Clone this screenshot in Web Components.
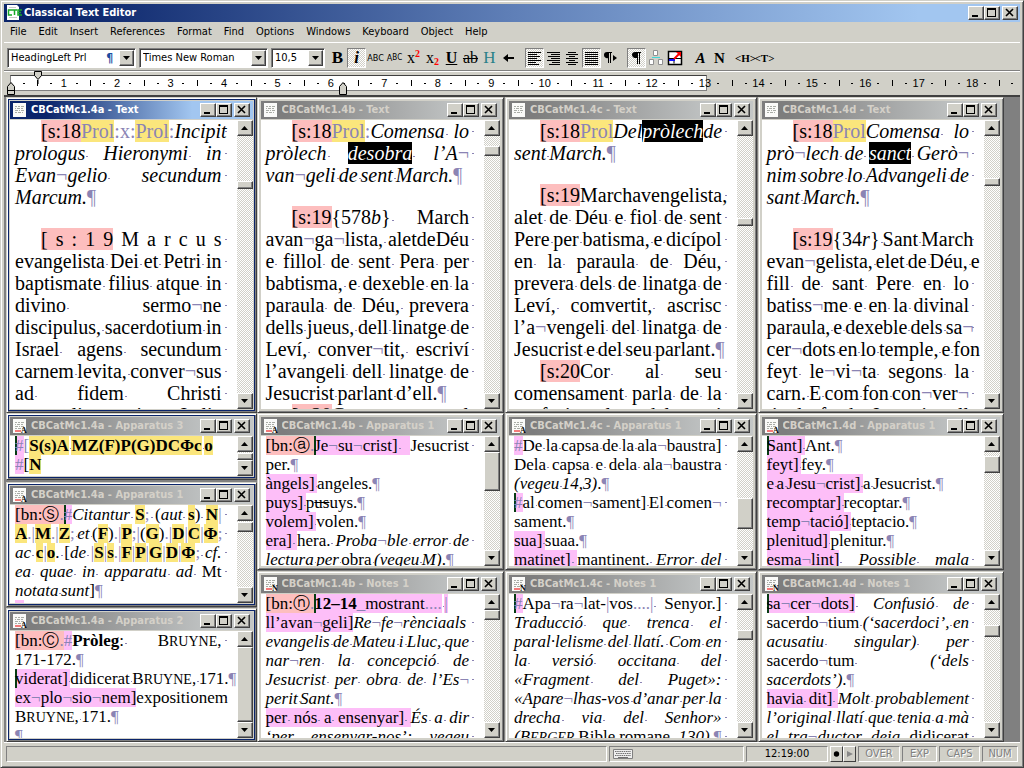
<!DOCTYPE html>
<html lang="ca">
<head>
<meta charset="utf-8">
<title>Classical Text Editor</title>
<style>
  html, body { margin: 0; height: 100%; }
  body {
    --face: #d1d0c8; --shadow: #808080; --dark: #404040; --mark: #8b84b4;
    --ui: "DejaVu Sans Condensed", "Noto Sans", sans-serif;
    --dither: repeating-conic-gradient(#fff 0 25%, #d1d0c8 0 50%) 0 0 / 2px 2px;
    background: var(--face); color: #000; overflow: hidden;
    font: 11px var(--ui);
  }
  /* inline marks used in the documents */
  text-line .sp { font-size: var(--gap); background: linear-gradient(var(--mark), var(--mark)) 1px 55% / 2px 1px no-repeat; }
  text-line .f { color: var(--mark); font-style: normal; font-weight: 400; }
  text-line .o { display: inline-block; text-align-last: left; }
  mark { color: inherit; background: #fdbebe; }
  mark.y { background: #fbe67c; }
  mark.y.p { color: var(--mark); font-style: normal; }
  mark.n { background: #fdbef8; }
  mark.k { box-shadow: inset 2px 0 #063c12; }
  mark.x { background: #000; color: #fff; }
  mark.g { font-weight: 700; font-style: normal; }
  small { font-size: 14px; }
</style>
</head>
<body>
<cte-app>
  <doc-column style="flex-grow:251">
    <doc-window caption="CBCatMc1.4a - Text" active framed style="--h:316" before="45" size="8" after="204">
      <text-line in><mark>[s:18</mark><mark class="y p">Prol</mark><span class="f">:x:</span><mark class="y p">Prol</mark><span class="f">:</span><i>Incipit</i></text-line>
      <text-line><i>prologus Hieronymi in</i></text-line>
      <text-line><i>Evan¬gelio secundum</i></text-line>
      <text-line last><i>Marcum.</i>¶</text-line>
      <text-line gap></text-line>
      <text-line in plain><mark>[ s : 1 9</mark> M a r c u s</text-line>
      <text-line>evangelista Dei et Petri in</text-line>
      <text-line>baptismate filius atque in</text-line>
      <text-line>divino sermo¬ne</text-line>
      <text-line>discipulus, sacerdotium in</text-line>
      <text-line>Israel agens secundum</text-line>
      <text-line>carnem levita, conver¬sus</text-line>
      <text-line>ad fidem Christi</text-line>
      <text-line>evangelium in Italia</text-line>
    </doc-window>
    <doc-window caption="CBCatMc1.4a - Apparatus 3" letter="A" framed small style="--h:67" before="1" size="7" after="0">
      <text-line last><mark class="n k">#</mark><span class="f">[</span><mark class="y g">S</mark><mark class="y g">(s)</mark><mark class="y g">A</mark> <mark class="y g">M</mark><mark class="y g">Z</mark><mark class="y g">(F)</mark><mark class="y g">P</mark><mark class="y g">(G)</mark><mark class="y g">D</mark><mark class="y g">C</mark><mark class="y g">Φ</mark><mark class="y g">c</mark> <mark class="y g">o</mark></text-line>
      <text-line last><mark class="n">#</mark>[<mark class="y g">N</mark></text-line>
    </doc-window>
    <doc-window caption="CBCatMc1.4a - Apparatus 1" letter="A" framed small style="--h:125;margin-top:2px" before="1" size="10" after="55">
      <text-line><mark>[bn:Ⓢ<span class="f">.</span></mark><mark class="n k">#</mark><i>Citantur </i><mark class="y g">S</mark><span class="f">;</span> (<i>aut </i><mark class="y g">s</mark>) <mark class="y g">N</mark><span class="f">|</span></text-line>
      <text-line><mark class="y g">A</mark><span class="f">.|</span><mark class="y g">M</mark><span class="f">.|</span><mark class="y g">Z</mark><span class="f">;</span> <i>et</i> (<mark class="y g">F</mark>)<span class="f">.|</span><mark class="y g">P</mark><span class="f">;|</span>(<mark class="y g">G</mark>)<span class="f">.|</span><mark class="y g">D</mark><span class="f">|</span><mark class="y g">C</mark><span class="f">|</span><mark class="y g">Φ</mark><span class="f">;</span></text-line>
      <text-line><i>ac </i><mark class="y g">c</mark><span class="f">|</span><mark class="y g">o</mark>. [<i>de </i><span class="f">|</span><mark class="y g">S</mark><span class="f">|</span><mark class="y g">s</mark><span class="f">.|</span><mark class="y g">F</mark><span class="f">|</span><mark class="y g">P</mark><span class="f">|</span><mark class="y g">G</mark><span class="f">|</span><mark class="y g">D</mark><span class="f">|</span><mark class="y g">Φ</mark><span class="f">;</span> <i>cf.</i></text-line>
      <text-line><i>ea quae in apparatu ad</i> Mt</text-line>
      <text-line last><i>notata sunt</i>]¶</text-line>
      <text-line><mark class="n">#</mark>Ihi hili [ et bo hild</text-line>
    </doc-window>
    <doc-window caption="CBCatMc1.4a - Apparatus 2" letter="A" framed small style="--h:134;margin-top:1px" before="0" size="75" after="0">
      <text-line><mark>[bn:Ⓒ<span class="f">.</span></mark><mark class="n">#</mark><b>Pròleg</b>: B<small>RUYNE</small>,</text-line>
      <text-line last>171-172.¶</text-line>
      <text-line last><mark class="n k">viderat] </mark>didicerat B<small>RUYNE</small>, 171.¶</text-line>
      <text-line><mark class="n">ex¬plo¬sio¬nem]</mark>expositionem</text-line>
      <text-line last>B<small>RUYNE</small>, 171.¶</text-line>
      <text-line last>¶</text-line>
    </doc-window>
  </doc-column>

  <doc-column style="flex-grow:248">
    <doc-window caption="CBCatMc1.4b - Text" style="--h:316" before="10" size="10" after="237">
      <text-line in><mark>[s:18</mark><mark class="y p">Prol</mark><span class="f">:</span><i>Comensa lo</i></text-line>
      <text-line><i>pròlech <mark class="x">desobra</mark> l’A¬</i></text-line>
      <text-line last><i>van¬geli de sent March.</i>¶</text-line>
      <text-line gap></text-line>
      <text-line in><mark>[s:19</mark>{578<i>b</i>} March</text-line>
      <text-line>avan¬ga¬lista, aletdeDéu</text-line>
      <text-line>e fillol de sent Pera per</text-line>
      <text-line>babtisma, e dexeble en la</text-line>
      <text-line>paraula de Déu, prevera</text-line>
      <text-line>dells jueus, dell linatge de</text-line>
      <text-line>Leví, conver¬tit, escriví</text-line>
      <text-line>l’avangeli dell linatge de</text-line>
      <text-line last>Jesucrist parlant d’ell.¶</text-line>
      <text-line in><mark>[s:20</mark>Con al</text-line>
    </doc-window>
    <doc-window caption="CBCatMc1.4b - Apparatus 1" letter="A" small style="--h:157" before="0" size="39" after="59">
      <text-line><mark>[bn:ⓐ<span class="f">.</span></mark><mark class="n k">Je¬su¬crist] </mark> Jesucrist</text-line>
      <text-line last>per.¶</text-line>
      <text-line last><mark class="n">àngels] </mark>angeles.¶</text-line>
      <text-line last><mark class="n">puys] </mark>p<s>us</s>uys.¶</text-line>
      <text-line last><mark class="n">volem] </mark>volen.¶</text-line>
      <text-line><mark class="n">era] </mark>hera. <i>Proba¬ble error de</i></text-line>
      <text-line last><i>lectura per</i> obra <i>(vegeu M)</i>.¶</text-line>
    </doc-window>
    <doc-window caption="CBCatMc1.4b - Notes 1" letter="N" small style="--h:171;margin-top:1px" before="0" size="10" after="101">
      <text-line last><mark>[bn:ⓝ<span class="f">.</span></mark><mark class="n k"><b>12–14</b><span class="f">_</span>mostrant<span class="f">....</span></mark> <mark class="n"><span class="f">|</span></mark></text-line>
      <text-line><mark class="n">ll’avan¬geli]</mark><i>Re¬fe¬rènciaals</i></text-line>
      <text-line><i>evangelis de Mateu i Lluc, que</i></text-line>
      <text-line><i>nar¬ren la concepció de</i></text-line>
      <text-line><i>Jesucrist per obra de l’Es¬</i></text-line>
      <text-line last><i>perit Sant.</i>¶</text-line>
      <text-line><mark class="n">per nós a ensenyar] </mark><i>És a dir</i></text-line>
      <text-line><i>‘per ensenyar-nos’: vegeu</i></text-line>
    </doc-window>
  </doc-column>

  <doc-column style="flex-grow:252">
    <doc-window caption="CBCatMc1.4c - Text" style="--h:316" before="82" size="8" after="167">
      <text-line in><mark>[s:18</mark><mark class="y p">Prol</mark><i>Del<mark class="x">pròlech</mark>de</i></text-line>
      <text-line last><i>sent March.</i>¶</text-line>
      <text-line gap></text-line>
      <text-line in><mark>[s:19</mark>Marchavengelista,</text-line>
      <text-line>alet de Déu e fiol de sent</text-line>
      <text-line>Pere per batisma, e dicípol</text-line>
      <text-line>en la paraula de Déu,</text-line>
      <text-line>prevera dels de linatga de</text-line>
      <text-line>Leví, comvertit, ascrisc</text-line>
      <text-line>l’a¬vengeli del linatga de</text-line>
      <text-line last>Jesucrist e del seu parlant.¶</text-line>
      <text-line in><mark>[s:20</mark>Cor al seu</text-line>
      <text-line>comensament parla de la</text-line>
      <text-line>profecia la del qui</text-line>
    </doc-window>
    <doc-window caption="CBCatMc1.4c - Apparatus 1" letter="A" small style="--h:157" before="46" size="31" after="21">
      <text-line><mark class="n">#</mark>De la capsa de la ala¬baustra]</text-line>
      <text-line>Dela capsa e dela ala¬baustra</text-line>
      <text-line last><i>(vegeu 14,3)</i>.¶</text-line>
      <text-line><mark class="n k">#</mark>al comen¬sament] El comen¬</text-line>
      <text-line last>sament.¶</text-line>
      <text-line last><mark class="n">sua] </mark>suaa.¶</text-line>
      <text-line><mark class="n">matinet] </mark>mantinent. <i>Error del</i></text-line>
    </doc-window>
    <doc-window caption="CBCatMc1.4c - Notes 1" letter="N" small style="--h:171;margin-top:1px" before="20" size="10" after="82">
      <text-line><mark class="n k">#</mark>Apa¬ra¬lat-<span class="f">|</span>vos<span class="f">....|</span> Senyor.]</text-line>
      <text-line><i>Traducció que trenca el</i></text-line>
      <text-line><i>paral·lelisme del llatí. Com en</i></text-line>
      <text-line><i>la versió occitana del</i></text-line>
      <text-line><i>«Fragment del Puget»:</i></text-line>
      <text-line><i>«Apare¬lhas-vos d’anar per la</i></text-line>
      <text-line><i>drecha via del Senhor»</i></text-line>
      <text-line><i>(B<small>ERGER</small></i> Bible romane, <i>130)</i>.¶</text-line>
    </doc-window>
  </doc-column>

  <doc-column style="flex-grow:247">
    <doc-window caption="CBCatMc1.4d - Text" style="--h:316" before="42" size="8" after="207">
      <text-line in><mark>[s:18</mark><mark class="y p">Prol</mark><i>Comensa lo</i></text-line>
      <text-line><i>prò¬lech de <mark class="x">sanct</mark> Gerò¬</i></text-line>
      <text-line><i>nim sobre lo Advangeli de</i></text-line>
      <text-line last><i>sant March.</i>¶</text-line>
      <text-line gap></text-line>
      <text-line in><mark>[s:19</mark>{34<i>r</i>} Sant March</text-line>
      <text-line>evan¬gelista, elet de Déu, e</text-line>
      <text-line>fill de sant Pere en lo</text-line>
      <text-line>batiss¬me e en la divinal</text-line>
      <text-line>paraula, e dexeble dels sa¬</text-line>
      <text-line>cer¬dots en lo temple, e fon</text-line>
      <text-line>feyt le¬vi¬ta segons la</text-line>
      <text-line>carn. E com fon con¬ver¬</text-line>
      <text-line>tit de fe de Jesucrist ell</text-line>
    </doc-window>
    <doc-window caption="CBCatMc1.4d - Apparatus 1" letter="A" small style="--h:157" before="4" size="17" after="77">
      <text-line last><mark class="n k">Sant] </mark>Ant.¶</text-line>
      <text-line last><mark class="n">feyt] </mark>fey.¶</text-line>
      <text-line last><mark class="n">e a Jesu¬crist] </mark>a Jesucrist.¶</text-line>
      <text-line last><mark class="n">recomptar] </mark>recoptar.¶</text-line>
      <text-line last><mark class="n">temp¬tació] </mark>teptacio.¶</text-line>
      <text-line last><mark class="n">plenitud] </mark>plenitur.¶</text-line>
      <text-line><mark class="n">esma¬lint]</mark> <i>Possible mala</i></text-line>
    </doc-window>
    <doc-window caption="CBCatMc1.4d - Notes 1" letter="N" small style="--h:171;margin-top:1px" before="15" size="12" after="85">
      <text-line><mark class="n k">sa¬cer¬dots]</mark> <i>Confusió de</i></text-line>
      <text-line>sacerdo¬tium <i>(‘sacerdoci’, en</i></text-line>
      <text-line><i>acusatiu singular) per</i></text-line>
      <text-line>sacerdo¬tum <i>(‘dels</i></text-line>
      <text-line last><i>sacerdots’)</i>.¶</text-line>
      <text-line><mark class="n">havia dit] </mark><i>Molt probablement</i></text-line>
      <text-line><i>l’original llatí que tenia a mà</i></text-line>
      <text-line><i>el tra¬ductor deia</i> didicerat</text-line>
    </doc-window>
  </doc-column>
</cte-app>

<script>
const define = (name, html, setup) => customElements.define(name, class extends HTMLElement {
  connectedCallback() {
    if (this.shadowRoot) return;
    const root = this.attachShadow({ mode: 'open' });
    root.innerHTML = typeof html === 'function' ? html(this) : html;
    if (setup) setup(this, root);
  }
});

/* a line of a document: spaces, hyphenation points and paragraph ends get visible marks */
define('text-line', `<style>
  :host { display: block; height: var(--lh); line-height: var(--lh); white-space: nowrap; text-align-last: justify;
    margin-right: -6px; padding-right: 6px;
    background: linear-gradient(var(--mark), var(--mark)) right 1px top 50% / 2px 1px no-repeat; }
  :host([last]) { text-align-last: left; background: none; }
  :host([in]) { padding-left: 26px; }
  :host([gap]) { height: 20px; background: none; }
</style><slot></slot>`, el => {
  const plain = el.hasAttribute('plain');
  const wrap = c => c === ' ' ? (plain ? ' ' : '<span class="sp"> </span>')
    : /[¬¶#]/.test(c) ? `<span class="f">${c}</span>` : `<span class="o">${c}</span>`;
  el.innerHTML = el.innerHTML.split(/(<[^>]+>)/).map(part => part[0] === '<' ? part : part.replace(/[ ¬¶#ⓐⓝⓈⒸ]/g, wrap)).join('');
});

define('window-buttons', `<style>
  :host { display: flex; }
  button { width: 16px; height: 14px; padding: 0; background: var(--face); border: 1px solid; border-color: #fff var(--dark) var(--dark) #fff;
    box-shadow: inset -1px -1px var(--shadow); display: flex; }
  button:last-child { margin-left: 2px; }
  svg { width: 14px; height: 12px; fill: none; stroke: #000; stroke-width: 2; }
</style>
<button aria-label="Minimize"><svg viewBox="0 0 14 12"><path d="M3 9h6"/></svg></button>
<button aria-label="Maximize"><svg viewBox="0 0 14 12" shape-rendering="crispEdges"><path d="M2 2h9"/><path d="M2.5 2v7.500h8V2" stroke-width="1"/></svg></button>
<button aria-label="Close"><svg viewBox="0 0 14 12"><path d="M3 2l7 7M10 2l-7 7" stroke-width="1.600"/></svg></button>`);

define('scroll-bar', el => `<style>
  :host { display: flex; flex-direction: column; width: 16px; flex: none; background: var(--dither); }
  button { flex: none; height: 16px; width: 16px; }
  button, i { padding: 0; display: block; box-sizing: border-box; background: var(--face); border: 1px solid; border-color: #fff var(--dark) var(--dark) #fff;
    box-shadow: inset -1px -1px var(--shadow); }
  i, span { flex: var(--n) var(--n) calc(var(--n) * 1px); min-height: 0; }
  svg { display: block; width: 14px; height: 14px; }
</style>
<button aria-label="Scroll up"><svg viewBox="0 0 14 14"><path d="M3 9l3.500-4L10 9z"/></svg></button>
<span style="--n:${el.getAttribute('before')}"></span><i style="--n:${el.getAttribute('size')}"></i><span style="--n:${el.getAttribute('after')}"></span>
<button aria-label="Scroll down"><svg viewBox="0 0 14 14"><path d="M3 5l3.500 4L10 5z"/></svg></button>`);

define('doc-icon', el => `<style>
  :host { display: block; width: 15px; height: 16px; flex: none; }
  svg { display: block; width: 15px; height: 16px; }
  text { font: 700 8px "Liberation Serif", serif; fill: #000; }
</style><svg viewBox="0 0 15 16"><path d="M1 1h13v14H1z" fill="#fafaf8"/>
<path d="M3 4.500h2M6 4.500h2M9 4.500h3M3 6.500h1M5 6.500h3M9 6.500h2M3 8.500h3M7 8.500h1M9 8.500h3M3 10.500h2M6 10.500h3M10 10.500h1" stroke="#a9aca6" stroke-width="1"/>
${el.getAttribute('letter') ? `<path d="M3 13h6" stroke="#f05050" stroke-width="1.500"/><text x="9" y="15">${el.getAttribute('letter')}</text>` : ''}</svg>`);

define('doc-window', el => {
  const a = n => el.getAttribute(n) || '';
  return `<style>
  :host { flex: var(--h) var(--h) calc(var(--h) * 1px); min-height: 0; box-sizing: border-box; display: flex; flex-direction: column; padding: 3px; background: var(--face);
    border: 1px solid; border-color: var(--face) var(--dark) var(--dark) var(--face);
    box-shadow: inset 1px 1px #fff, inset -1px -1px var(--shadow); --lh: 22px; --fs: 20px; --gap: 12px; }
  :host([framed]) { box-shadow: inset 1px 1px #fff, inset -1px -1px var(--shadow), inset 0 0 0 2px #0a246a; }
  :host([small]) { --lh: 19px; --fs: 17px; --gap: 10px; }
  header { flex: none; height: 18px; margin-bottom: 1px; padding: 0 3px 0 2px; display: flex; align-items: center; gap: 4px;
    background: linear-gradient(90deg, #7d7d7d 10%, #c3c6c6 85%); color: #d4d0c8; font-weight: 700; }
  :host([active]) header { background: linear-gradient(90deg, #0a246a 15%, #a2c6f0 75%); color: #fff; }
  h2 { flex: 1; min-width: 0; margin: 0; font: 700 11px/18px var(--ui); white-space: nowrap; overflow: hidden; }
  main { flex: 1; min-height: 0; display: flex; background: #fff; }
  article { flex: 1; min-width: 0; overflow: hidden; padding: 0 15px 0 5px; font: var(--fs)/var(--lh) "Liberation Serif", serif; }
</style>
<header><doc-icon letter="${a('letter')}"></doc-icon><h2>${a('caption')}</h2><window-buttons></window-buttons></header>
<main><article><slot></slot></article><scroll-bar before="${a('before')}" size="${a('size')}" after="${a('after')}"></scroll-bar></main>`;
});

define('doc-column', `<style>:host { flex-basis: 0; min-width: 0; display: flex; flex-direction: column; box-sizing: border-box; }
  :host(:nth-child(2)), :host(:nth-child(3)) { padding-right: 1px; }</style><slot></slot>`);

define('menu-bar', `<style>
  :host { display: block; height: 20px; }
  nav { display: flex; }
  button { border: 0; background: none; padding: 0 6px; color: inherit; font: 11px/20px var(--ui); }
</style><nav>${['File','Edit','Insert','References','Format','Find','Options','Windows','Keyboard','Object','Help'].map(m => `<button>${m}</button>`).join('')}</nav>`);

define('combo-box', el => `<style>
  :host { display: grid; height: 20px; box-sizing: border-box; border: 1px solid; border-color: var(--shadow) #fff #fff var(--shadow); box-shadow: inset 1px 1px var(--dark); background: #fff; padding: 1px; }
  select, div { grid-area: 1 / 1; min-width: 0; }
  select { appearance: none; border: 0; margin: 0; padding: 0 16px 0 2px; background: none; color: #000; font: 11px/16px var(--ui); }
  div { display: flex; justify-content: flex-end; pointer-events: none; }
  b { color: #1a4ca0; font-size: 12px; line-height: 16px; margin-right: 6px; }
  i { width: 15px; background: var(--face); border: 1px solid; border-color: #fff var(--dark) var(--dark) #fff; box-sizing: border-box; box-shadow: inset -1px -1px var(--shadow); }
  svg { display: block; width: 13px; height: 14px; }
</style><select aria-label="${el.getAttribute('label')}"><option>${el.getAttribute('value')}</option></select>
<div>${el.hasAttribute('para') ? '<b>¶</b>' : ''}<i><svg viewBox="0 0 13 14"><path d="M3 5h7L6.500 9z"/></svg></i></div>`);

const bars = w => `<svg viewBox="0 0 19 20" shape-rendering="crispEdges" stroke="#000">${w.map(([x, l], i) => `<path d="M${x} ${4.5 + i * 2}h${l}"/>`).join('')}</svg>`;
define('tool-bar', `<style>
  :host { display: flex; height: 29px; box-sizing: border-box; align-items: center; padding: 2px 2px 0 3px; border-top: 1px solid #fff; border-bottom: 1px solid var(--shadow); }
  button { width: 19px; height: 20px; padding: 0; border: 1px solid transparent; background: none; color: #000; font: 700 17px/18px "Liberation Serif", serif; display: flex; justify-content: center; align-items: center; flex: none; white-space: nowrap; }
  button[aria-pressed] { background: var(--dither); border-color: var(--shadow) #fff #fff var(--shadow); }
  svg { width: 19px; height: 20px; flex: none; }
  .abc { font: 9px/18px var(--ui); }
  .abc small { font-size: 8px; }
  .x { font-weight: 400; font-size: 16px; }
  .x b { color: #f00; font-size: 10px; }
  .x .up { align-self: flex-start; line-height: 10px; } .x .dn { align-self: flex-end; line-height: 10px; }
  .pl { font-weight: 400; font-size: 16px; }
  .h { color: #2a8088; font-weight: 400; }
  .t { font: 700 15px/18px "Liberation Serif", serif; }
  .tag { font: 700 11px/18px "Liberation Serif", serif; }
  combo-box { flex: none; }
  .g1 { margin-left: 3px; } .g2 { margin-left: 3px; } .g3 { margin-left: 7px; }
</style>
<combo-box label="Style" value="HeadingLeft Prl" para style="width:129px"></combo-box>
<combo-box class="g2" label="Font" value="Times New Roman" style="width:129px"></combo-box>
<combo-box class="g2" label="Size" value="10,5" style="width:54px"></combo-box>
<button class="g1">B</button><button aria-pressed="true"><i>i</i></button>
<button class="abc">ABC</button><button class="abc">A<small>BC</small></button>
<button class="x">x<b class="up">2</b></button><button class="x">x<b class="dn">2</b></button>
<button class="pl"><b><u>U</u></b></button><button class="pl"><s>ab</s></button><button class="h">H</button>
<button aria-label="Back"><svg viewBox="0 0 19 20"><path d="M4 10l5-4v3h6v2H9v3z"/></svg></button>
<button class="g3" aria-label="Align left" aria-pressed="true">${bars([[3,13],[3,9],[3,12],[3,9],[3,13],[3,8],[3,11]])}</button>
<button aria-label="Align right">${bars([[3,13],[7,9],[4,12],[7,9],[3,13],[8,8],[5,11]])}</button>
<button aria-label="Center">${bars([[5,8],[3,12],[6,6],[3,12],[6,6],[3,12],[5,8]])}</button>
<button aria-label="Justify" aria-pressed="true">${bars([[3,13],[3,13],[3,13],[3,13],[3,13],[3,13],[3,13]])}</button>
<button aria-label="Text direction"><svg viewBox="0 0 19 20"><path d="M3 7a3 3 0 0 1 3-3h5v1h-1v10H9V5H8v10H7v-5a3 3 0 0 1-4-3zM12 7l4 3-4 3z"/></svg></button>
<button class="g3" aria-label="Show marks" aria-pressed="true"><svg viewBox="0 0 19 20"><path d="M5 7a3 3 0 0 1 3-3h6v1h-1v11h-1V5h-1v11h-1v-6a4 3 0 0 1-5-3z"/></svg></button>
<button aria-label="Tree"><svg viewBox="0 0 19 20" fill="#fff" stroke="#909090"><path d="M7.500 2.500h4v5h-4zM3.500 11.500h4v5h-4zM12.500 11.500h4v5h-4z"/><path d="M6 9.500h8" stroke="#40d8d8"/></svg></button>
<button aria-label="Picture"><svg viewBox="0 0 19 20"><path d="M3.500 3.500h13v13h-13z" fill="#fff" stroke="#000" stroke-width="1.500"/><path d="M4 10.500h5v5M9 10.500h7" stroke="#000" fill="none"/><path d="M4 12h6" stroke="#11f" stroke-width="2"/><path d="M9 11l5-5" stroke="#f00" stroke-width="2"/><path d="M11 4h5v5z" fill="#f00"/></svg></button>
<button class="g3 t"><i>A</i></button><button class="t">N</button>
<button class="g3 tag">&lt;H&gt;</button><button class="tag">&lt;T&gt;</button>`);

define('ruler-bar', `<style>
  :host { display: grid; height: 24px; box-sizing: border-box; border-top: 1px solid #fff; padding: 3px 0 0 6px; }
  .band, ol { grid-area: 1 / 1; }
  .band { width: 69%; height: 16px; box-sizing: border-box; background: #fff; border: 1px solid var(--shadow); border-top-color: var(--dark); }
  ol { list-style: none; margin: 0; padding: 0 21px 0 27px; display: flex; height: 16px; align-items: center;
    background: linear-gradient(#000,#000) 13px 50%/2px 1px no-repeat, linear-gradient(#000,#000) right 7px top 50%/2px 1px no-repeat, linear-gradient(#000,#000) right 20px top 50%/1px 6px no-repeat; }
  li { flex: 1; text-align: center; font: 11px/16px "Liberation Sans", sans-serif;
    background: linear-gradient(#000,#000) 0 50%/1px 6px no-repeat, linear-gradient(#000,#000) 25% 50%/2px 1px no-repeat, linear-gradient(#000,#000) 75% 50%/2px 1px no-repeat; }
  svg { position: absolute; width: 10px; height: 13px; fill: var(--face); stroke: #000; }
</style>
<div class="band"></div>
<ol>${Array.from({ length: 18 }, (_, i) => `<li>${i + 1}</li>`).join('')}</ol>
<svg style="left:6px;top:82px" viewBox="0 0 10 13"><path d="M1.500 12.500v-8l3.500-4 3.500 4v8zM1.500 8.500h7" /></svg>
<svg style="left:33px;top:71px" viewBox="0 0 10 13"><path d="M1.500.500h7v4l-3.500 4-3.500-4zM5 9v4"/></svg>
<svg style="left:338px;top:82px" viewBox="0 0 10 13"><path d="M1.500 12.500v-8l3.500-4 3.500 4v8z"/></svg>`);

define('status-bar', `<style>
  :host { display: flex; height: 16px; padding: 3px 2px 2px; gap: 2px; border-top: 1px solid #fff; }
  div { box-sizing: border-box; height: 16px; border: 1px solid; border-color: var(--shadow) #fff #fff var(--shadow); text-align: center; font: 11px/14px var(--ui); flex: none; }
  .off { color: var(--shadow); text-shadow: 1px 1px #fff; }
  .rec { display: flex; border: 0; }
  .rec button { width: 13px; height: 16px; padding: 0; border: 1px solid; border-color: #fff var(--dark) var(--dark) #fff; background: var(--face); }
  svg { display: block; }
</style>
<div style="flex:1"></div>
<div style="width:135px"><svg width="22" height="12" viewBox="0 0 22 12" style="margin:1px 2px"><path d="M1.500 1.500h19v9h-19z" fill="#eee" stroke="#808080"/><path d="M3 3.500h16M4 5.500h15M3 7.500h16" stroke="#707070" stroke-dasharray="1.500 .700"/><path d="M6 9.500h10" stroke="#707070"/></svg></div>
<div style="width:82px">12:19:00</div>
<div class="rec"><button aria-label="Record"><svg width="11" height="14"><circle cx="5.500" cy="7" r="2.700"/></svg></button><button aria-label="Play"><svg width="11" height="14" fill="#888"><path d="M3 4l6 3-6 3z"/></svg></button></div>
<div class="off" style="width:42px">OVER</div><div class="off" style="width:35px">EXP</div><div class="off" style="width:41px">CAPS</div><div class="off" style="width:36px">NUM</div>`);

define('cte-app', `<style>
  :host { display: flex; flex-direction: column; height: 100vh; box-sizing: border-box; padding: 3px; background: var(--face);
    border: 1px solid; border-color: var(--face) var(--dark) var(--dark) var(--face); box-shadow: inset 1px 1px #fff, inset -1px -1px var(--shadow); }
  header { flex: none; height: 18px; display: flex; align-items: center; padding: 0 2px; gap: 1px; color: #fff;
    background: linear-gradient(90deg, #0a246a 6%, #5f7fb7 50%, #a2c6f0 90%); }
  h1 { flex: 1; margin: 0; font: 700 11px/18px var(--ui); }
  .desk { flex: 1; min-height: 0; display: flex; background: var(--shadow); border-top: 2px solid var(--dark); padding: 0 16px 0 2px; }
  menu-bar, tool-bar, ruler-bar, status-bar { flex: none; }
</style>
<header><svg width="17" height="16" viewBox="0 0 17 16"><path d="M1 0h10l2 2v13H1z" fill="#fff"/><path d="M3 2.500h7M3 12.500h8" stroke="#c8c8c8"/><path d="M6 5H2.500v5H6M6 5h5M8.500 5v5M16 5h-4v5h4M12 7.500h3" fill="none" stroke="#18a828" stroke-width="1.500"/></svg><h1>Classical Text Editor</h1><window-buttons></window-buttons></header>
<menu-bar></menu-bar><tool-bar></tool-bar><ruler-bar></ruler-bar>
<div class="desk"><slot></slot></div>
<status-bar></status-bar>`);
</script>
</body>
</html>
